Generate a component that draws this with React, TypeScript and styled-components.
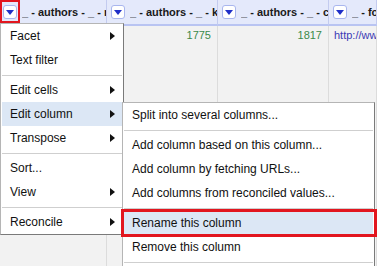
import styled, { createGlobalStyle } from "styled-components";

const GlobalStyle = createGlobalStyle`
    html, body {
        margin: 0;
        padding: 0;
        overflow: hidden;
        background: #f2f2f2;
        font-family: "Liberation Sans", Arial, sans-serif;
    }
`;

const Page = styled.div`
    position: relative;
    width: 377px;
    height: 266px;
    overflow: hidden;
`;

const Grid = styled.div`
    display: flex;
    height: 100%;
`;

const Column = styled.div<{ $width?: number }>`
    display: flex;
    flex-direction: column;
    width: ${p => (p.$width ? `${p.$width}px` : "auto")};
    flex: ${p => (p.$width ? "none" : "1")};
    min-width: 0;
`;

const HeaderCell = styled.div<{ $pad: number }>`
    display: flex;
    align-items: center;
    gap: 5px;
    height: 24px;
    padding-left: ${p => p.$pad}px;
    background: #e4e9fb;
    border-right: 1px solid #c3cbef;
    border-bottom: 2px solid #b9c4f2;
    overflow: hidden;
    white-space: nowrap;
`;

const DropButton = styled.span`
    flex: none;
    display: flex;
    align-items: center;
    justify-content: center;
    width: 14px;
    height: 14px;
    box-sizing: border-box;
    background: #fff;
    border: 1px solid #a9b6ee;
    border-radius: 3px;

    &::after {
        content: "";
        border-left: 4px solid transparent;
        border-right: 4px solid transparent;
        border-top: 5px solid #1f2fc8;
        margin-top: 1px;
    }
`;

const HeaderText = styled.span`
    font-size: 11px;
    font-weight: bold;
    color: #1a1a1a;
    overflow: hidden;
`;

const DataCell = styled.div<{ $align: "left" | "right"; $kind: "number" | "link" }>`
    flex: 1;
    padding: 3px 6px 0 5px;
    text-align: ${p => p.$align};
    font-size: 11px;
    line-height: 13px;
    color: ${p => (p.$kind === "number" ? "#3a8a4a" : "#3b3bb5")};
    border-right: 1px solid #dcdcdc;
    white-space: nowrap;
    overflow: hidden;
`;

const Menu = styled.div<{ $left: number; $top: number; $width: number }>`
    position: absolute;
    left: ${p => p.$left}px;
    top: ${p => p.$top}px;
    width: ${p => p.$width}px;
    box-sizing: border-box;
    background: #fff;
    border: 1px solid #b5b5b5;
    border-right-color: #7a7a7a;
    border-bottom-color: #7a7a7a;
    padding: 0 1px;
`;

const Item = styled.div<{ $active?: boolean; $sub?: boolean }>`
    position: relative;
    height: 24px;
    line-height: 24px;
    padding-left: 8px;
    font-size: 12px;
    color: #111;
    white-space: nowrap;
    background: ${p => (p.$active ? "#dce7f5" : "transparent")};

    &::after {
        content: "";
        display: ${p => (p.$sub ? "block" : "none")};
        position: absolute;
        right: 7px;
        top: 8px;
        border-top: 4px solid transparent;
        border-bottom: 4px solid transparent;
        border-left: 5px solid #111;
    }
`;

const Separator = styled.div`
    height: 6px;
    display: flex;
    align-items: center;

    &::before {
        content: "";
        flex: 1;
        height: 1px;
        background: #cfcfcf;
    }
`;

const Highlight = styled.div<{ $left: number; $top: number; $width: number; $height: number; $line: number }>`
    position: absolute;
    left: ${p => p.$left}px;
    top: ${p => p.$top}px;
    width: ${p => p.$width}px;
    height: ${p => p.$height}px;
    box-sizing: border-box;
    border: ${p => p.$line}px solid #e2161f;
    pointer-events: none;
`;

const columns = [
    { width: 107, pad: 3, title: "_ - authors - _ - name", value: "", kind: "number" as const },
    { width: 111, pad: 4, title: "_ - authors - _ - key", value: "1775", kind: "number" as const },
    { width: 111, pad: 4, title: "_ - authors - _ - created", value: "1817", kind: "number" as const },
    { width: 0, pad: 4, title: "_ - found", value: "http://www.example.org", kind: "link" as const },
];

type Entry = { label: string; sub?: boolean; active?: boolean } | "sep";

const mainMenu: Entry[] = [
    { label: "Facet", sub: true },
    { label: "Text filter" },
    "sep",
    { label: "Edit cells", sub: true },
    { label: "Edit column", sub: true, active: true },
    { label: "Transpose", sub: true },
    "sep",
    { label: "Sort..." },
    { label: "View", sub: true },
    "sep",
    { label: "Reconcile", sub: true },
];

const columnMenu: Entry[] = [
    { label: "Split into several columns..." },
    "sep",
    { label: "Add column based on this column..." },
    { label: "Add column by fetching URLs..." },
    { label: "Add columns from reconciled values..." },
    "sep",
    { label: "Rename this column", active: true },
    { label: "Remove this column" },
    "sep",
    { label: "Move column to beginning" },
    { label: "Move column to end" },
];

function MenuList({ entries }: { entries: Entry[] }) {
    return (
        <>
            {entries.map((e, i) =>
                e === "sep" ? (
                    <Separator key={i} />
                ) : (
                    <Item key={i} $sub={e.sub} $active={e.active}>
                        {e.label}
                    </Item>
                )
            )}
        </>
    );
}

export default function App() {
    return (
        <Page>
            <GlobalStyle />
            <Grid>
                {columns.map((c, i) => (
                    <Column key={i} $width={c.width || undefined}>
                        <HeaderCell $pad={c.pad}>
                            <DropButton />
                            <HeaderText>{c.title}</HeaderText>
                        </HeaderCell>
                        <DataCell $align={c.kind === "number" ? "right" : "left"} $kind={c.kind}>
                            {c.value}
                        </DataCell>
                    </Column>
                ))}
            </Grid>

            <Menu $left={0} $top={23} $width={124}>
                <MenuList entries={mainMenu} />
            </Menu>
            <Menu $left={122} $top={102} $width={253}>
                <MenuList entries={columnMenu} />
            </Menu>

            <Highlight $left={0} $top={0} $width={20} $height={23} $line={2} />
            <Highlight $left={121} $top={209} $width={256} $height={28} $line={3} />
        </Page>
    );
}
